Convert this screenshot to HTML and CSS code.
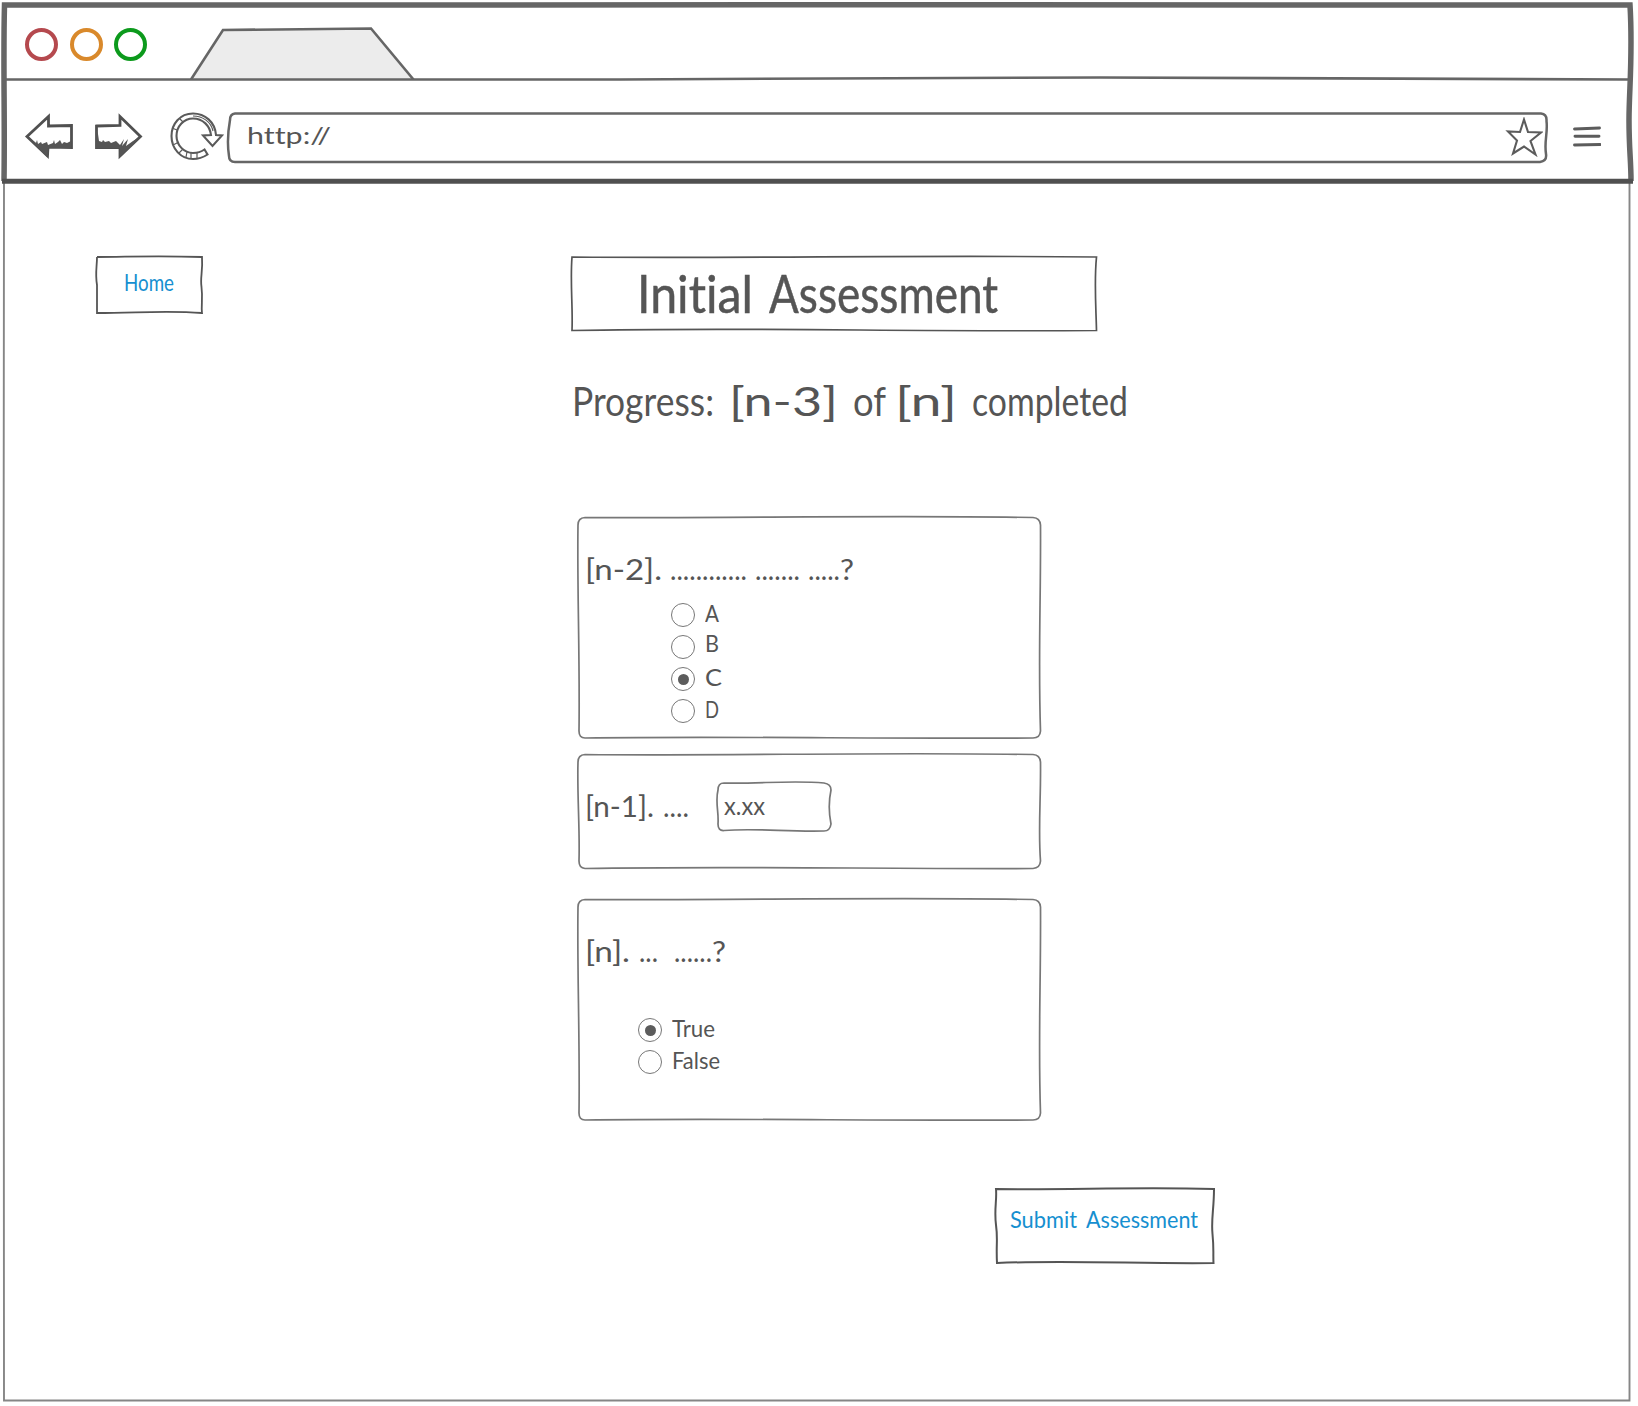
FILE: index.html
```html
<!DOCTYPE html>
<html lang="en">
<head>
<meta charset="utf-8">
<title>Initial Assessment</title>
<link rel="stylesheet" href="styles.css">
</head>
<body>
<div class="window">
  <header class="chrome">
    <svg class="frame" viewBox="0 0 1638 181">
      <g fill="none" stroke="#666">
        <path stroke-width="5.5" d="M4 181C5 120 3 60 4.500 5C400 6 1100 4 1630 5C1633 55 1629 90 1629 120S1631 160 1631 181"/>
        <path stroke="#505050" stroke-width="5" d="M2 181.300H1633"/>
        <path stroke-width="2.600" d="M6 79.500H620C800 79.500 900 77 1100 77.500S1500 79.500 1628 79.500"/>
      </g>
    </svg>
    <div class="tabs">
      <i class="dot red"></i><i class="dot amber"></i><i class="dot green"></i>
      <svg class="tab" width="226" height="54" viewBox="189 26 226 54"><path d="M191 79.500L223 30L371 28.500L413.500 79.500" fill="#ececec" stroke="#666" stroke-width="2.600"/></svg>
    </div>
    <div class="toolbar">
      <svg class="back" width="50" height="48" viewBox="24 112 50 48">
        <path d="M27 136.500L48.500 116.500L48.500 126L71.500 125.500V147.500L48 147L47.500 156Z" fill="#fff" stroke="#505050" stroke-width="2.800"/>
        <path d="M27 136L36 143L37 140L38 144L41 142L42 144L47 142L48 145L53 143L54 140L55 144L58 142L60 140L62 144L64 142L67 143L71 141V148H48L47 157Z" fill="#555"/>
      </svg>
      <svg class="forward" width="50" height="48" viewBox="94 112 50 48">
        <path d="M96.500 126L120 125.500V116.500L140.500 136.500L120 156V147.500H96.500Z" fill="#fff" stroke="#505050" stroke-width="2.800"/>
        <path d="M96 130L98 134L99 141L102 142L103 140L105 142L109 141L111 143L116 141L120 145L124 139L122 146L128 139L126 146L133 141L141 136L120 157V148H96Z" fill="#555"/>
      </svg>
      <svg class="reload" width="56" height="52" viewBox="168 110 56 52" fill="none" stroke="#5a5a5a" stroke-width="2.100">
        <path d="M216 135C215 122 205 113.500 193 113.500C180 113.500 171.500 124 171.500 136C171.500 149 181 159 193 159C199 159 203 157.500 207.500 154.500L204.500 149.500C201 152 198 153 193 153C184 153 176.500 145 176.500 136C176.500 126 184 118.500 193 118.500C203 118.500 210 126 211 135L203 135.500L212.500 146L222 135.500Z"/>
        <path stroke-width="1.200" d="M172 128L177 130M173 145L179 142M179 153L183 149M186 157L187 152M191 158V153M197 158V153M180 119L183 122M193 116C203 116 211 122 213 131"/>
      </svg>
      <div class="address">
        <svg class="frame" viewBox="0 0 1320 49"><path fill="none" stroke="#666" stroke-width="2.500" d="M7 .5C400 1.500 900-.5 1313 .5Q1319 1 1318.500 8C1320 20 1316 28 1318 41Q1319 48 1312 49C900 48 400 50 7 49Q1 49 1 43C-1 30 0 18 2 7Q2 1 7 .5Z"/></svg>
        <span class="word url">http://</span>
        <svg class="star" width="38" height="40" viewBox="1505 117 38 40"><path d="M1524 119.500L1528 132L1541 132.500L1530.500 141L1535.500 154.500L1524 146.500L1513 153.500L1517 140.500L1508 131.500L1520 132Z" fill="#fff" stroke="#5c5c5c" stroke-width="2.100"/></svg>
      </div>
      <svg class="menu" width="28" height="22" viewBox="1573 125 28 22"><path d="M1574.500 129L1599.500 128M1575 136.300H1599M1574.500 145L1600 144.500" stroke="#5c5c5c" stroke-width="2.900" stroke-linecap="round"/></svg>
    </div>
  </header>

  <main class="page">
    <svg class="frame" viewBox="0 0 1638 1225"><path d="M4 0C3 400 4 900 4 1219.500H1629.500C1630 800 1629 400 1629.500 0" fill="none" stroke="#868686" stroke-width="1.900"/></svg>
    <div class="top">
      <a class="home">
        <svg class="frame" viewBox="0 0 106 56"><path d="M0 0C30 0 55-1.500 105 0C106 15 103 20 104.500 30C106 42 104 48 105 56C70 53 40 56 0 56V28C-2 16 0 10 0 0" fill="none" stroke="#555" stroke-width="1.800"/></svg>
        <span class="word">Home</span>
      </a>
      <h1 class="title">
        <svg class="frame" viewBox="0 0 525 73"><path d="M0 0C180 1.500 340-2 524.500 0C522 25 524 50 524.500 73.500C330 75 180 70 0 73.500C1 50-2 25 0 0Z" fill="none" stroke="#555" stroke-width="1.700"/></svg>
        <span class="word initial">Initial</span><span class="word assessment">Assessment</span>
      </h1>
    </div>
    <p class="progress"><span class="word p1">Progress:</span><span class="word p2">[n-3]</span><span class="word p3">of</span><span class="word p4">[n]</span><span class="word p5">completed</span></p>

    <section class="card tall">
      <svg class="frame" viewBox="0 0 462 221"><path d="M7 .5C150 1.500 300-2 455 .5Q462 1 462.500 8C463 80 460 140 462.500 214Q462 221 455 221C300 222 150 219 7 221Q1 221 1 214C2 140-1 70 0 8Q0 1 7 .5Z" fill="none" stroke="#777" stroke-width="1.700"/></svg>
      <div class="question"><span class="word n2">[n-2].</span><span class="word d12">............</span><span class="word d7">.......</span><span class="word d5">.....</span><span class="word mark">?</span></div>
      <div class="options letters">
        <label class="option"><i class="radio"></i><span class="word ch">A</span></label>
        <label class="option higher"><i class="radio"></i><span class="word ch">B</span></label>
        <label class="option lower"><i class="radio on"></i><span class="word wide">C</span></label>
        <label class="option"><i class="radio"></i><span class="word ch">D</span></label>
      </div>
    </section>

    <section class="card short">
      <svg class="frame" viewBox="0 0 462 114"><path d="M7 .5C150 2 300-2 455 .5Q462 1 462.500 8C463 45 460 75 462.500 107Q462 114 455 114.500C300 115 150 112 7 114.500Q1 114 1 107C2 75-1 40 0 8Q0 1 7 .5Z" fill="none" stroke="#777" stroke-width="1.700"/></svg>
      <div class="question"><span class="word n1">[n-1].</span><span class="word d4">....</span>
        <div class="field">
          <svg class="frame" viewBox="0 0 114 49"><path d="M7 1C40 2 75-2 107 1Q114 2 114 8C111 22 112 32 114 42Q113 49 107 49C70 50 40 46 7 48.500Q1 49 1 42C2 30-2 20 1 8Q1 1 7 1Z" fill="none" stroke="#777" stroke-width="1.700"/></svg>
          <span class="word xx">x.xx</span>
        </div>
      </div>
    </section>

    <section class="card tall last">
      <svg class="frame" viewBox="0 0 462 221"><path d="M7 .5C150 1.500 300-2 455 .5Q462 1 462.500 8C463 80 460 140 462.500 214Q462 221 455 221C300 222 150 219 7 221Q1 221 1 214C2 140-1 70 0 8Q0 1 7 .5Z" fill="none" stroke="#777" stroke-width="1.700"/></svg>
      <div class="question"><span class="word n0">[n].</span><span class="word d3">...</span><span class="word d6">......</span><span class="word mark">?</span></div>
      <div class="options truth">
        <label class="option"><i class="radio on"></i><span class="word true">True</span></label>
        <label class="option"><i class="radio"></i><span class="word false">False</span></label>
      </div>
    </section>

    <a class="submit">
      <svg class="frame" viewBox="0 0 218 74"><path d="M0 0C70 1 140-2 218 0C218 20 215 30 216.500 45C218 60 217 65 217.500 74C150 75 70 71 1 74C0 55 2 50 0 36C-2 20 1 12 0 0Z" fill="none" stroke="#555" stroke-width="2"/></svg>
      <span class="word s1">Submit</span><span class="word s2">Assessment</span>
    </a>
  </main>
</div>
<script src="fit.js"></script>
</body>
</html>
```
FILE: styles.css
```css
* { box-sizing: border-box; }
body { margin: 0; background: #fff; color: #555; font-family: Lato, "Open Sans", sans-serif; font-variant-ligatures: none; }
.window { width: 1638px; height: 1406px; display: flex; flex-direction: column; overflow: hidden; }

/* Hand-drawn outline laid over the box it belongs to */
.frame { position: absolute; inset: 0; width: 100%; height: 100%; overflow: visible; pointer-events: none; }
.word { display: block; flex: none; white-space: nowrap; transform-origin: 0 50%; }

.chrome { position: relative; height: 181px; flex: none; z-index: 1; }
.tabs { height: 80px; display: flex; align-items: flex-start; padding-left: 25px; }
.dot { width: 33px; height: 33px; margin: 28px 11.5px 0 0; border: 4px solid; border-radius: 50%; flex: none; }
.red { border-color: #b5494e; }
.amber { border-color: #d9892b; }
.green { border-color: #0c9a1c; }
.tab { margin: 26px 0 0 30.5px; }
.toolbar { height: 101px; display: flex; align-items: flex-start; padding-left: 24px; }
.back { margin-top: 32px; }
.forward { margin: 32px 0 0 20px; }
.reload { margin: 30px 0 0 24px; }
.address { position: relative; width: 1320px; height: 49px; margin: 33px 0 0 4px; display: flex; align-items: flex-start; padding-left: 19px; font-size: 24px; line-height: 44px; }
.url { width: 84px; }
.star { margin: 4px 0 0 1174px; }
.menu { margin: 45px 0 0 25px; }

.page { position: relative; height: 1225px; padding-top: 76px; display: flex; flex-direction: column; align-items: flex-start; }
.top { display: flex; align-items: flex-start; height: 73px; padding-left: 97px; }
.home, .submit { position: relative; display: flex; color: #168fd0; font-size: 23px; }
.home { width: 106px; height: 56px; padding-left: 27px; line-height: 50px; }
.home .word { width: 50px; }
.title { position: relative; width: 525px; height: 73px; margin: 0 0 0 369px; display: flex; padding-left: 65px; font-size: 53px; font-weight: 400; line-height: 72px; -webkit-text-stroke: .5px #555; }
.initial { width: 116px; }
.assessment { width: 229px; margin-left: 16px; }

.progress { display: flex; margin: 43px 0 88px 572px; height: 56px; font-size: 41px; line-height: 56px; }
.p1 { width: 142px; }
.p2 { width: 109px; margin-left: 15px; }
.p3 { width: 33px; margin-left: 15px; }
.p4 { width: 62px; margin-left: 9px; }
.p5 { width: 156px; margin-left: 15px; }

.card { position: relative; width: 462px; margin-left: 578px; padding: 32px 0 0 7px; }
.tall { height: 221px; }
.short { height: 114px; margin-top: 16px; }
.last { margin-top: 31px; }
.question { display: flex; height: 40px; font-size: 28px; line-height: 40px; }
.n2 { width: 77px; }
.n1 { width: 69px; }
.n0 { width: 45px; }
.d12 { width: 77px; margin-left: 8px; }
.d7 { width: 45px; margin-left: 8px; }
.d5 { width: 32px; margin-left: 8px; }
.d4 { width: 26px; margin-left: 9px; }
.d3 { width: 19px; margin-left: 9px; }
.d6 { width: 38px; margin-left: 16px; }
.mark { width: 14px; }
.field { position: relative; width: 114px; height: 49px; margin: -4px 0 0 28px; padding-left: 7px; font-size: 25px; line-height: 46px; }
.xx { width: 41px; }

.options { display: flex; flex-direction: column; font-size: 23px; line-height: 24px; }
.letters { margin: 10px 0 0 86px; }
.truth { margin: 43px 0 0 53px; }
.option { display: flex; align-items: center; gap: 10px; height: 32px; }
.option .word { margin-bottom: 5px; }
.option.higher .word { margin-bottom: 8px; }
.option.lower .word { margin-bottom: 4px; }
.radio { width: 24px; height: 24px; border: 1.5px solid #777; border-radius: 50%; display: grid; place-items: center; flex: none; }
.radio.on::after { content: ""; width: 11px; height: 11px; border-radius: 50%; background: #5c5c5c; }
.ch { width: 14px; }
.wide { width: 17px; }
.true { width: 43px; }
.false { width: 48px; }

.submit { width: 218px; height: 74px; margin: 69px 0 0 996px; padding-left: 14px; line-height: 60px; }
.s1 { width: 67px; }
.s2 { width: 112px; margin-left: 9px; }
```
FILE: fit.js
```js
// Condense or widen each word so its lettering fills the slot set in the stylesheet.
document.querySelectorAll('.word').forEach(function (word) {
  var range = document.createRange();
  range.selectNodeContents(word);
  var natural = range.getBoundingClientRect().width;
  word.style.transform = 'scaleX(' + word.offsetWidth / natural + ')';
});
```
